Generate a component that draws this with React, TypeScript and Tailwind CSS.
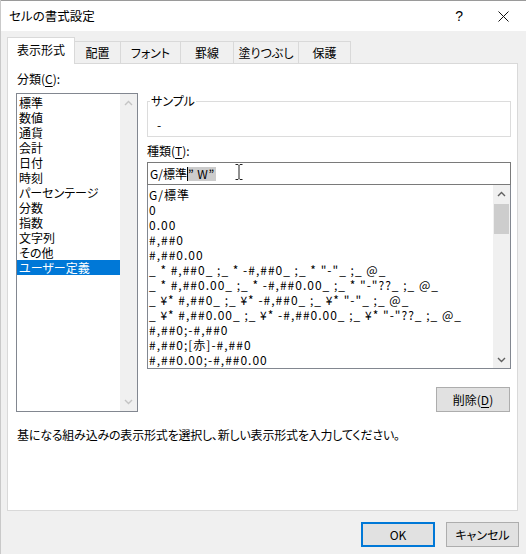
import React from 'react';

const categories = [
  '標準',
  '数値',
  '通貨',
  '会計',
  '日付',
  '時刻',
  'パーセンテージ',
  '分数',
  '指数',
  '文字列',
  'その他',
  'ユーザー定義',
];

const formats = [
  'G/標準',
  '0',
  '0.00',
  '#,##0',
  '#,##0.00',
  '_ * #,##0_ ;_ * -#,##0_ ;_ * "-"_ ;_ @_ ',
  '_ * #,##0.00_ ;_ * -#,##0.00_ ;_ * "-"??_ ;_ @_ ',
  '_ ¥* #,##0_ ;_ ¥* -#,##0_ ;_ ¥* "-"_ ;_ @_ ',
  '_ ¥* #,##0.00_ ;_ ¥* -#,##0.00_ ;_ ¥* "-"??_ ;_ @_ ',
  '#,##0;-#,##0',
  '#,##0;[赤]-#,##0',
  '#,##0.00;-#,##0.00',
];

const tabs = [
  { name: '配置', w: 'w-[46px]' },
  { name: 'フォント', w: 'w-[60px]' },
  { name: '罫線', w: 'w-[53px]' },
  { name: '塗りつぶし', w: 'w-[65px]' },
  { name: '保護', w: 'w-[52px]' },
];

const Chevron: React.FC<{ up?: boolean; color: string }> = ({ up, color }) => (
  <svg width="9" height="6" viewBox="0 0 9 6">
    <path
      d={up ? 'M1 5 L4.5 1.5 L8 5' : 'M1 1 L4.5 4.5 L8 1'}
      fill="none"
      stroke={color}
      strokeWidth="1.4"
    />
  </svg>
);

const App: React.FC = () => {
  return (
    <div className="w-[526px] h-[554px] bg-[#f0f0f0] overflow-hidden border-l border-[#c9c9c9] font-['Noto_Sans_CJK_JP','Noto_Sans',sans-serif] text-[12px] text-black [font-feature-settings:'palt']">
      {/* Title bar */}
      <div className="h-[31px] bg-white flex items-center pl-[8px] border-t border-[#9a9a9a]">
        <span className="leading-[16px] text-[12.5px]">セルの書式設定</span>
        <div className="ml-auto flex items-center">
          <span className="text-[14px] leading-[16px] mr-[35px] font-['Liberation_Sans',sans-serif]">?</span>
          <svg width="11" height="11" viewBox="0 0 11 11" className="mr-[17px]">
            <path d="M0.5 0.5 L10.5 10.5 M10.5 0.5 L0.5 10.5" stroke="#111" strokeWidth="1" />
          </svg>
        </div>
      </div>

      {/* Body */}
      <div className="pl-[6px] pr-[8px] pt-[6px]">
        {/* Tabs */}
        <div className="flex items-end h-[26px]">
          <div className="w-[68px] h-[27px] -mb-px bg-white border border-b-0 border-[#d9d9d9] relative z-10 flex items-center justify-center leading-[16px] pb-[2px]">
            表示形式
          </div>
          {tabs.map((t) => (
            <div
              key={t.name}
              className={`${t.w} h-[22px] border-t border-r border-[#d9d9d9] flex items-center justify-center leading-[16px]`}
            >
              {t.name}
            </div>
          ))}
        </div>

        {/* Panel */}
        <div className="h-[448px] bg-white border border-[#d9d9d9]">
          <div className="flex pl-[8px]">
            {/* Category column */}
            <div className="w-[122px]">
              <div className="mt-[7px] h-[16px] leading-[16px] pl-[1px]">
                分類(<span className="underline underline-offset-2">C</span>):
              </div>
              <div className="mt-[6px] h-[319px] border border-[#828790] flex">
                <div className="flex-1 pt-[1px]">
                  {categories.map((c, i) => (
                    <div
                      key={c}
                      className={`h-[15px] leading-[15px] pl-[2px] whitespace-nowrap ${
                        i === categories.length - 1 ? 'bg-[#0078d7] text-white' : ''
                      }`}
                    >
                      {c}
                    </div>
                  ))}
                </div>
                <div className="w-[17px] bg-[#f0f0f0] flex flex-col items-center justify-between py-[6px]">
                  <Chevron up color="#c4c4c4" />
                  <Chevron color="#c4c4c4" />
                </div>
              </div>
            </div>

            {/* Format column */}
            <div className="ml-[9px] w-[364px]">
              <div className="mt-[37px] h-[36px] border border-[#dcdcdc] relative pl-[9px] pt-[15px] leading-[16px]">
                <span className="absolute -top-[9px] left-[2px] bg-white px-[1px] leading-[16px]">
                  サンプル
                </span>
                -
              </div>
              <div className="mt-[6px] h-[16px] leading-[16px]">
                種類(<span className="underline underline-offset-2">T</span>):
              </div>
              <div className="mt-[3px] h-[23px] border border-[#7a7a7a] relative flex items-center pl-[2px] z-10">
                <span className="leading-[14px]">G/標準</span>
                <span className="w-px h-[14px] bg-black" />
                <span className="leading-[14px] bg-[#cccccc] pr-[1px] tracking-[0.5px]">” W”</span>
                <svg width="8" height="16" viewBox="0 0 8 16" className="absolute left-[87px] top-[1px]">
                  <path
                    d="M0.5 0.5 H3 L4 1.5 L5 0.5 H7.5 M4 1.5 V14.5 M0.5 15.5 H3 L4 14.5 L5 15.5 H7.5"
                    fill="none"
                    stroke="#222"
                    strokeWidth="1"
                  />
                </svg>
              </div>
              <div className="-mt-px h-[185px] border border-[#828790] flex overflow-hidden">
                <div className="flex-1 pt-[2px] pl-[1px] overflow-hidden">
                  {formats.map((f) => (
                    <div key={f} className="h-[15px] leading-[15px] whitespace-pre tracking-[1px]">
                      {f}
                    </div>
                  ))}
                </div>
                <div className="w-[17px] bg-[#f0f0f0] flex flex-col items-center pt-[6px] pb-[5px]">
                  <Chevron up color="#606060" />
                  <div className="mt-[7px] w-[15px] h-[30px] bg-[#cdcdcd]" />
                  <div className="mt-auto">
                    <Chevron color="#606060" />
                  </div>
                </div>
              </div>
              <div className="mt-[18px] flex justify-end pr-[1px]">
                <button className="w-[74px] h-[25px] bg-[#e1e1e1] border border-[#adadad] leading-[16px]">
                  削除(<span className="underline underline-offset-2">D</span>)
                </button>
              </div>
            </div>
          </div>
          <div className="mt-[15px] pl-[9px] h-[16px] leading-[16px] tracking-[-0.2px]">
            基になる組み込みの表示形式を選択し、新しい表示形式を入力してください。
          </div>
        </div>

        {/* Footer */}
        <div className="mt-[11px] flex justify-end gap-[11px] -mr-px">
          <button className="w-[74px] h-[25px] bg-[#e1e1e1] border-2 border-[#0078d7] leading-[16px]">
            OK
          </button>
          <button className="w-[73px] h-[25px] bg-[#e1e1e1] border border-[#adadad] leading-[16px]">
            キャンセル
          </button>
        </div>
      </div>
    </div>
  );
};

export default App;
